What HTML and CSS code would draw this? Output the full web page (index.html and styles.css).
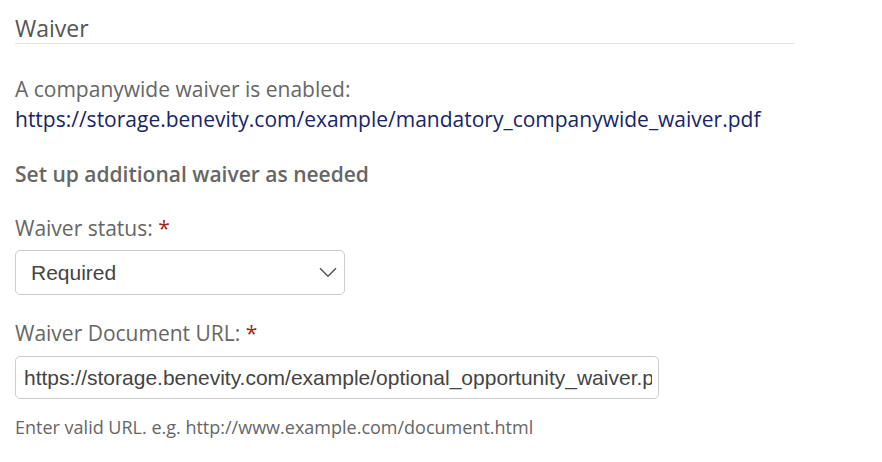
FILE: index.html
```html
<!DOCTYPE html>
<html>
<head>
<meta charset="utf-8">
<link rel="stylesheet" href="styles.css">
</head>
<body>
<div class="section">
  <h2 class="title">Waiver</h2>
  <div class="info">
    <div>A companywide waiver is enabled:</div>
    <a class="link" href="#">https://storage.benevity.com/example/mandatory_companywide_waiver.pdf</a>
  </div>
  <div class="subhead">Set up additional waiver as needed</div>
  <div class="field">
    <label class="label">Waiver status: <span class="req">*</span></label>
    <div class="select">
      <span class="select-text">Required</span>
      <svg class="chev" width="18" height="11" viewBox="0 0 18 11"><path d="M1 1.2 L9 9.2 L17 1.2" fill="none" stroke="#555" stroke-width="1.5"/></svg>
    </div>
  </div>
  <div class="field field-url">
    <label class="label">Waiver Document URL: <span class="req">*</span></label>
    <div class="input"><span class="input-text">https://storage.benevity.com/example/optional_opportunity_waiver.pdf</span></div>
    <div class="help">Enter valid URL. e.g. http://www.example.com/document.html</div>
  </div>
</div>
</body>
</html>
```
FILE: styles.css
```css
html, body { margin: 0; padding: 0; background: #fff; }
body { font-family: "Open Sans", sans-serif; color: #666; }
.section { padding: 13px 0 0 15px; width: 780px; }
.title { margin: 0; font-size: 23px; font-weight: 400; color: #555; line-height: 30px; border-bottom: 1px solid #e3e3e3; }
.info { margin-top: 30px; font-size: 21px; line-height: 30px; }
.link { color: #172568; text-decoration: none; }
.subhead { margin-top: 25px; font-size: 21px; font-weight: 600; line-height: 30px; color: #666; }
.field { margin-top: 24px; }
.field-url { margin-top: 23px; }
.label { display: block; font-size: 21px; line-height: 30px; color: #666; }
.req { color: #a3241d; }
.select { margin-top: 7px; width: 330px; height: 45px; box-sizing: border-box; border: 1px solid #ccc; border-radius: 5px; display: flex; align-items: center; justify-content: space-between; padding: 0 7px 0 15px; }
.select-text, .input-text { font-family: "Liberation Sans", Arial, sans-serif; font-size: 21px; color: #444; }
.input { margin-top: 8px; width: 644px; height: 43px; box-sizing: border-box; border: 1px solid #ccc; border-radius: 5px; display: flex; align-items: center; padding: 0 6px 0 8px; }
.input-text { flex: 1; min-width: 0; overflow: hidden; white-space: nowrap; }
.help { margin-top: 16px; font-size: 18px; line-height: 24px; color: #666; }
```
